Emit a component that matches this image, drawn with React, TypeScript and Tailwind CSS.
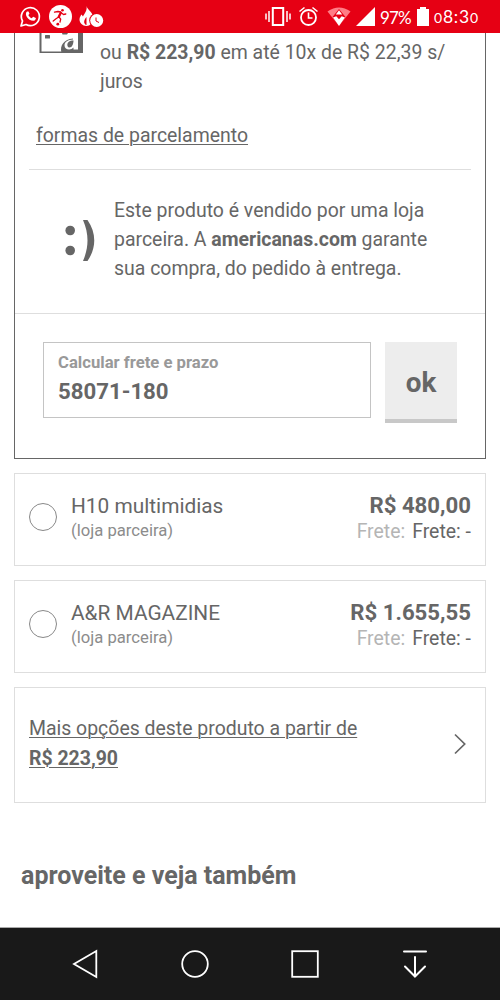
import type { ReactNode } from 'react';

function StatusBar() {
  return (
    <header className="flex h-[33px] shrink-0 items-center bg-[#e60014] text-white">
      <svg className="block h-[33px] w-[380px] shrink-0" viewBox="0 0 380 33" fill="none" stroke="#fff">
        {/* chat */}
        <path d="M21 26l1.500-5A9 9 0 1 1 26 24.500Z" strokeWidth="1.700" strokeLinejoin="round" />
        <path d="M27 11.500c-3 2.500.5 9.300 6.500 9.300 2 0 2.500-2 2.300-2.700l-2.600-1.300-1.500 1.500c-1.600-.6-2.900-1.900-3.300-3.200l1.100-1.400-1-2.200Z" fill="#fff" stroke="none" />
        {/* football */}
        <circle cx="60.500" cy="16.500" r="11.500" fill="#fff" stroke="none" />
        <g stroke="#e60014" strokeLinecap="round" strokeLinejoin="round">
          <path d="M54.500 12.200l3.500-.7 2.500.5M59 17l1.700 2.200-.7 2.800M58.300 17.300l-2.300 1.500-2.800 2.200M61.500 13l2 1.500 2.300-.5" strokeWidth="1.300" />
          <path d="M60.800 12.800l-2 4" strokeWidth="2.400" />
        </g>
        <circle cx="62.500" cy="10.300" r="1.300" fill="#e60014" stroke="none" />
        <circle cx="57.800" cy="24.200" r="1.400" fill="#e60014" stroke="none" />
        {/* flame with clock */}
        <path d="M86.500 6c1 4 6.500 6 6.500 11.500 0 5-3 8.500-6.500 8.500-4 0-7-3-7-6.500 0-2.500 1.500-4 2-5l1.500 2c1.500-3 4.500-6 3.500-10.500Z" fill="#fff" stroke="none" />
        <path d="M86 25c-3-2-2-5 .5-8v8Z" fill="#e60014" stroke="none" />
        <circle cx="96.500" cy="20.500" r="7.300" fill="#e60014" stroke="none" />
        <circle cx="96.700" cy="20.500" r="6.500" fill="#fff" stroke="none" />
        <path d="M96 17.500v3.500l3 1.500" stroke="#e60014" strokeWidth="1" />
        {/* vibrate */}
        <rect x="272.800" y="8" width="10.400" height="17" strokeWidth="2" />
        <path d="M269 11v11M266 13.500v6M287 11v11M290 13.500v6" strokeWidth="1.500" />
        {/* alarm */}
        <circle cx="308.500" cy="17.500" r="7.500" strokeWidth="1.800" />
        <path d="M308.500 12.500v5.500h4M299.500 11.500l5-4M317.500 11.500l-5-4" strokeWidth="1.600" />
        {/* wifi */}
        <path d="M327.500 11.500Q339 3.500 350.500 11.500L339 26Z" fill="#ff7d86" stroke="none" />
        <path d="M339 9l6.500 8L339 27l-6.500-10Z" fill="#e60014" stroke="none" />
        <path d="M333 17.500l3.300-1.200 2.700 3 2.700-3 3.300 1.200-6 8.500Z" fill="#fff" stroke="none" />
        <path d="M335.800 14.500l3.200-4.300 3.200 4.300Z" fill="#fff" stroke="none" />
        {/* cell signal */}
        <path d="M375 7v19h-19Z" fill="#fff" stroke="none" />
      </svg>
      <span className="w-[36px] pt-px font-['Lato',sans-serif] text-[17px] leading-[33px] tracking-[-0.9px] whitespace-nowrap">97%</span>
      <svg className="block h-[33px] w-[18px] shrink-0" viewBox="0 0 18 33" fill="#fff">
        <path d="M4 7h6v2h3v17H1V9h3Z" />
      </svg>
      <span className="flex items-baseline font-['Lato',sans-serif] text-[17.5px] leading-[33px] tracking-[0.8px] whitespace-nowrap">
        <span className="text-[14px]">0</span>8:3<span className="text-[14px]">0</span>
      </span>
    </header>
  );
}

function Seller({ name, price }: { name: string; price: string }) {
  return (
    <label className="mx-[14px] mb-[14px] flex h-[93px] shrink-0 justify-between border border-[#dedede] px-[14px]">
      <span className="flex">
        <span className="mt-[29px] mr-[14px] size-[28px] rounded-full border-[1.5px] border-[#888]" />
        <span className="pt-[19px]">
          <span className="block text-[20.83px] leading-[26px]">{name}</span>
          <span className="block text-[16.67px] leading-[24px] text-[#8c8c8c]">(loja parceira)</span>
        </span>
      </span>
      <span className="pt-[18px] text-right">
        <span className="block text-[22.2px] leading-[27px] font-bold">{price}</span>
        <span className="block text-[19.44px] leading-[26px]">
          <span className="mr-[7px] text-[#b5b5b5]">Frete:</span>
          <span>Frete: -</span>
        </span>
      </span>
    </label>
  );
}

function NavIcon({ children }: { children: ReactNode }) {
  return (
    <svg className="h-[32px] w-[110px]" viewBox="0 0 110 32" fill="none" stroke="#fff" strokeWidth="1.8" strokeLinecap="round">
      {children}
    </svg>
  );
}

export default function App() {
  return (
    <div className="flex h-[1000px] w-[500px] flex-col overflow-hidden bg-white font-['Roboto',sans-serif] text-[19.44px] leading-[29.17px] text-[#666]">
      <StatusBar />
      <section className="mx-[14px] mb-[14px] flex h-[426px] shrink-0 flex-col border-x border-b border-[#666]">
        <div className="flex h-[88px] shrink-0">
          <svg className="ml-[24px] h-[21px] w-[44px] shrink-0" viewBox="0 0 44 21">
            <path d="M.5 0H2.500v18.500H23V20H.5Z" fill="#666" />
            <path d="M22.500 20C20.500 12 25 6.500 34 5.500V2L39 0h5v20Z" fill="#666" />
            <path d="M33.500 0H39V16.500H34.500V14.500C32 17.500 25.500 17 25.500 12.500 25.500 8.500 29 7 34 6.500Z" fill="#fff" />
            <path d="M23 0h6l-1 1.500h-4.500Z" fill="#666" />
            <path d="M28.500 13C27.500 9.500 30.500 7.500 34.500 7.500 34.500 11 33 14.500 30.500 14.500Q29 14.500 28.500 13Z" fill="#666" />
            <rect x="6" y="2" width="5" height="3.500" rx=".5" fill="#666" />
          </svg>
          <p className="ml-[17px] pt-[5px]">
            ou <b>R$ 223,90</b> em até 10x de R$ 22,39 s/<br />juros
          </p>
        </div>
        <a className="ml-[21px] block h-[48px] shrink-0 underline decoration-1 underline-offset-2">formas de parcelamento</a>
        <div className="mx-[14px] h-px shrink-0 bg-[#dedede]" />
        <div className="flex h-[144px] shrink-0 border-b border-[#dedede]">
          <svg className="mt-[50px] ml-[50px] h-[44px] w-[32px] shrink-0" viewBox="0 0 32 44" fill="#666">
            <circle cx="5.200" cy="10.500" r="4.800" />
            <circle cx="5.200" cy="30.500" r="4.800" />
            <path d="M18 0h4.500c9 13 9 28 0 41H18c6-14 6-27 0-41Z" />
          </svg>
          <p className="ml-[17px] pt-[26px]">
            Este produto é vendido por uma loja<br />
            parceira. A <b>americanas.com</b> garante<br />
            sua compra, do pedido à entrega.
          </p>
        </div>
        <div className="flex pt-[28px] pl-[28px]">
          <div className="h-[76px] w-[328px] border-[1.5px] border-[#c4c4c4] px-[14px] pt-[8px]">
            <div className="text-[16.67px] leading-[23px] font-bold text-[#999]">Calcular frete e prazo</div>
            <div className="text-[22.2px] leading-[34px] font-bold">58071-180</div>
          </div>
          <button className="ml-[14px] h-[81px] w-[72px] border-b-4 border-[#c8c8c8] bg-[#ededed] pt-[4px] text-[27.8px] font-bold">ok</button>
        </div>
      </section>
      <Seller name="H10 multimidias" price="R$ 480,00" />
      <Seller name="A&R MAGAZINE" price="R$ 1.655,55" />
      <a className="mx-[14px] flex h-[116px] shrink-0 items-center justify-between border border-[#dedede] pr-[19px] pl-[14px]">
        <span className="pb-[3px] underline decoration-1 underline-offset-2">
          Mais opções deste produto a partir de<br /><b>R$ 223,90</b>
        </span>
        <svg className="mb-[2px] h-[22px] w-[13px]" viewBox="0 0 13 22" fill="none" stroke="#666" strokeWidth="1.7">
          <path d="M2 1.500l9.700 9.500L2 20.500" />
        </svg>
      </a>
      <h2 className="mt-[58px] ml-[21px] h-[66px] text-[25px] leading-[30px] font-bold">aproveite e veja também</h2>
      <nav className="flex h-[73px] shrink-0 items-center border-t border-[#aaa] bg-[#191919] pl-[30px]">
        <NavIcon><path d="M66.300 3v26L44 16Z" /></NavIcon>
        <NavIcon><circle cx="55" cy="16" r="12.800" /></NavIcon>
        <NavIcon><rect x="42.200" y="3.200" width="25.600" height="25.600" /></NavIcon>
        <NavIcon><path d="M44 3.500h22M55 9v19.500M45 18.500l10 10 10-10" strokeWidth="2" /></NavIcon>
      </nav>
    </div>
  );
}
